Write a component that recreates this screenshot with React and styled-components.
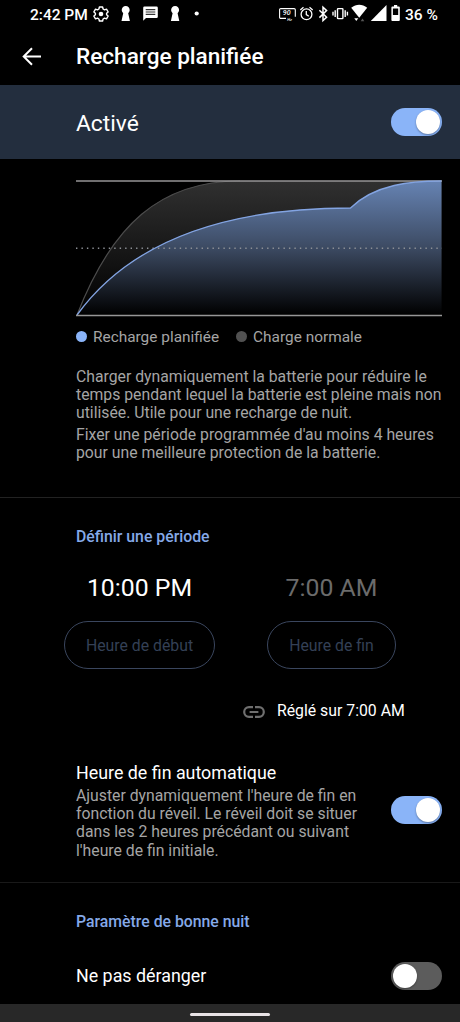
import styled, { createGlobalStyle } from 'styled-components'

export default function App() {
    return (
        <Screen>
            <GlobalStyle />
            <StatusBar />
            <Header>
                <BackIcon viewBox="0 0 20 20">
                    <path d="M10 1.2 1.7 9.5l8.3 8.3M2 9.5h17" />
                </BackIcon>
                <Title>Recharge planifiée</Title>
            </Header>
            <Banner>
                <BannerLabel>Activé</BannerLabel>
                <Switch checked />
            </Banner>
            <ChargeSection>
                <ChargeChart />
                <Legend>
                    <LegendItem><Dot color="#8ab4f8" />Recharge planifiée</LegendItem>
                    <LegendItem><Dot color="#515151" />Charge normale</LegendItem>
                </Legend>
                <Description>
                    <Paragraph>
                        Charger dynamiquement la batterie pour réduire le<br />
                        temps pendant lequel la batterie est pleine mais non<br />
                        utilisée. Utile pour une recharge de nuit.
                    </Paragraph>
                    <Paragraph>
                        Fixer une période programmée d'au moins 4 heures<br />
                        pour une meilleure protection de la batterie.
                    </Paragraph>
                </Description>
            </ChargeSection>
            <PeriodSection>
                <SectionTitle>Définir une période</SectionTitle>
                <Times>
                    <TimeColumn width="151px">
                        <Time>10:00 PM</Time>
                        <TimeButton>Heure de début</TimeButton>
                    </TimeColumn>
                    <TimeColumn width="129px">
                        <Time disabled>7:00 AM</Time>
                        <TimeButton>Heure de fin</TimeButton>
                    </TimeColumn>
                </Times>
                <LinkedAlarm>
                    <LinkIcon viewBox="0 0 22 12">
                        <path d="M10 1.2H6a4.8 4.8 0 0 0 0 9.6h4M12 1.2h4a4.8 4.8 0 0 1 0 9.6h-4M6.6 6h8.8" />
                    </LinkIcon>
                    Réglé sur 7:00 AM
                </LinkedAlarm>
                <AutoRow>
                    <div>
                        <RowTitle>Heure de fin automatique</RowTitle>
                        <Paragraph>
                            Ajuster dynamiquement l'heure de fin en<br />
                            fonction du réveil. Le réveil doit se situer<br />
                            dans les 2 heures précédant ou suivant<br />
                            l'heure de fin initiale.
                        </Paragraph>
                    </div>
                    <Switch checked />
                </AutoRow>
            </PeriodSection>
            <NightSection>
                <SectionTitle>Paramètre de bonne nuit</SectionTitle>
                <NightRow>
                    <RowTitle>Ne pas déranger</RowTitle>
                    <Switch />
                </NightRow>
            </NightSection>
            <NavBar>
                <NavHandle />
            </NavBar>
        </Screen>
    )
}

const Switch = function ({ checked }) {
    return (
        <Track $checked={checked} role="switch" aria-checked={!!checked}>
            <Thumb />
        </Track>
    )
}

const StatusBar = function () {
    return (
        <StyledStatusBar>
            <Clock>2:42 PM</Clock>
            <StatusIcons viewBox="92 4 112 20" width="112" height="20">
                {/* settings */}
                <path
                    fill="none" stroke="#fff" strokeWidth="1.4" strokeLinejoin="round"
                    d="M99.4 7h3.2l.5 2 1.4.8 2-.6 1.6 2.7-1.5 1.4v1.4l1.5 1.4-1.6 2.7-2-.6-1.4.8-.5 2h-3.2l-.5-2-1.4-.8-2 .6-1.6-2.7 1.5-1.4v-1.4l-1.5-1.4 1.6-2.7 2 .6 1.4-.8z"
                />
                <circle cx="101" cy="14" r="2.3" fill="#fff" />
                {/* keyholes */}
                <path fill="#fff" d="M123.2 13.2a4 4 0 1 1 5 0l1.7 7.8h-8.4z" />
                <path fill="#fff" d="M172.6 13.2a4 4 0 1 1 5 0l1.7 7.8h-8.4z" />
                {/* message */}
                <path fill="#fff" d="M144.5 6.5h12a1.3 1.3 0 0 1 1.3 1.3v8.9a1.3 1.3 0 0 1-1.3 1.3H146l-2.8 2.8V7.8a1.3 1.3 0 0 1 1.3-1.3z" />
                <path stroke="#333" strokeWidth="1.2" d="M145.7 9.7h9.6M145.7 12h9.6M145.7 14.3h9.6" />
                <circle cx="196.7" cy="13.5" r="2.1" fill="#fff" />
            </StatusIcons>
            <StatusIcons viewBox="278 4 124 20" width="124" height="20">
                {/* refresh rate */}
                <path fill="none" stroke="#fff" strokeWidth="1.1" d="M286 18.4h-5.2a1.2 1.2 0 0 1-1.2-1.2V9.8a1.2 1.2 0 0 1 1.2-1.2h13.3a1.2 1.2 0 0 1 1.2 1.2v7" />
                <text x="282.8" y="15.4" fontSize="7" fontStyle="italic" fill="#fff">90</text>
                <text x="287.3" y="20.7" fontSize="4" fontStyle="italic" fill="#fff">Hz</text>
                {/* alarm */}
                <g fill="none" stroke="#fff" strokeWidth="1.3">
                    <circle cx="306.5" cy="14.3" r="5.4" />
                    <path d="M306.3 10.9v3.7l2.5 1.7M300.3 10l3.2-2.7M312.7 10l-3.2-2.7" />
                </g>
                {/* bluetooth */}
                <path fill="none" stroke="#fff" strokeWidth="1.5" d="m319.4 10.2 7.2 7-3.6 3.3V7.3l3.6 3.3-7.2 7" />
                {/* vibrate */}
                <g fill="none" stroke="#fff" strokeWidth="1.4">
                    <rect x="337.5" y="8.6" width="5.4" height="10" rx=".6" />
                    <path d="M335.2 10.2v6.8M333 11.8v3.6M345.2 10.2v6.8M347.4 11.8v3.6" />
                </g>
                {/* wifi */}
                <path fill="#fff" d="M351.2 7.8c5-4 11-4 16 0l-8 10z" />
                <path fill="#fff" d="m354.3 18.3h4l-2 2.8z" />
                <path fill="#555" d="m362.5 18.4 1.8 2.8h-3.6z" />
                {/* signal */}
                <path fill="#fff" d="M386.500 5v16H370.800z" />
                {/* battery */}
                <path fill="#fff" fillRule="evenodd" d="M392.3 6.5h1.7V5h3.2v1.5h1.7q.9 0 .9.9v12.7q0 .9-.9.9h-6.6q-.9 0-.9-.9V7.4q0-.9.9-.9zM392.9 8.4v6.7h5.3V8.4z" />
            </StatusIcons>
            <Battery>36 %</Battery>
        </StyledStatusBar>
    )
}

const ChargeChart = function () {
    return (
        <Chart viewBox="76 180 366 137">
            <defs>
                <linearGradient id="normal" x1="0" y1="0" x2="0" y2="1">
                    <stop offset="0" stopColor="#303030" />
                    <stop offset="1" stopColor="#000" />
                </linearGradient>
                <linearGradient id="planned" gradientUnits="userSpaceOnUse" x1="0" y1="181" x2="0" y2="315">
                    <stop offset="0" stopColor="#6683b3" />
                    <stop offset=".5" stopColor="#3c4a62" />
                    <stop offset="1" stopColor="#000" />
                </linearGradient>
            </defs>
            <path fill="url(#normal)" d="M77 315C112 225 160 181 240 181H441.5V315z" />
            <path fill="none" stroke="#4c4c4c" strokeWidth="1.2" d="M77 315C112 225 160 181 240 181" />
            <path fill="url(#planned)" d="M77 315C135 235 235 208 350.5 208C375 184 412 181 441.5 181V315z" />
            <path stroke="#969496" strokeWidth="1.5" d="M76 181H442" />
            <path stroke="#8d9096" strokeWidth="1.4" strokeDasharray="1.4 4.06" d="M76 248.2H442" />
            <path fill="none" stroke="#83a4e2" strokeWidth="1.3" d="M77 315C135 235 235 208 350.5 208C375 184 412 181 441.5 181" />
            <path stroke="#969696" strokeWidth="1.5" d="M76 315.4H442" />
        </Chart>
    )
}

const GlobalStyle = createGlobalStyle`
    * {
        box-sizing: border-box;
    }

    body {
        margin: 0;
        background: #000;
    }
`

const Screen = styled.div`
    display: flex;
    flex-direction: column;
    width: 460px;
    height: 1022px;
    overflow: hidden;
    background: #000;
    color: #fff;
    font-family: Roboto, sans-serif;
    white-space: nowrap;
`

const StyledStatusBar = styled.div`
    display: flex;
    align-items: center;
    height: 28px;
    padding-left: 30px;
    font-size: 15.5px;
    font-weight: 500;
`

const Clock = styled.span`
    width: 62px;
    padding-top: 2px;
`

const StatusIcons = styled.svg`
    flex: none;

    & + & {
        margin-left: 74px;
    }
`

const Battery = styled.span`
    margin-left: 3px;
    padding-top: 2px;
`

const Header = styled.header`
    display: flex;
    align-items: center;
    height: 57px;
    padding-left: 22px;
`

const BackIcon = styled.svg`
    width: 20px;
    height: 20px;
    margin-right: 34px;
    fill: none;
    stroke: #fff;
    stroke-width: 2;
`

const Title = styled.h1`
    margin: 0;
    font-size: 22.6px;
    font-weight: 500;
`

const Banner = styled.div`
    display: flex;
    align-items: center;
    justify-content: space-between;
    height: 74px;
    padding: 0 18px 0 76px;
    background: #232e3e;
`

const BannerLabel = styled.span`
    padding-top: 2px;
    font-size: 22.8px;
`

const Track = styled.div`
    display: flex;
    flex: none;
    justify-content: ${props => props.$checked ? 'flex-end' : 'flex-start'};
    width: 51px;
    height: 28px;
    padding: 2px;
    border-radius: 14px;
    background: ${props => props.$checked ? '#8ab4f8' : '#5c5c5c'};
`

const Thumb = styled.div`
    width: 24px;
    height: 24px;
    border-radius: 50%;
    background: #fff;
    box-shadow: 0 1px 2px rgba(0, 0, 0, 0.35);
`

const ChargeSection = styled.section`
    height: 339px;
    padding: 21px 18px 0 76px;
    border-bottom: 1px solid #222;
`

const Chart = styled.svg`
    display: block;
    width: 366px;
    height: 137px;
`

const Legend = styled.div`
    display: flex;
    gap: 17px;
    height: 19px;
    margin-top: 10px;
    font-size: 15.4px;
    color: #a5a5a5;
`

const LegendItem = styled.span`
    display: flex;
    align-items: center;
    gap: 6px;
`

const Dot = styled.span`
    width: 11px;
    height: 11px;
    border-radius: 50%;
    background: ${props => props.color};
`

const Description = styled.div`
    display: flex;
    flex-direction: column;
    gap: 3.5px;
    margin-top: 22px;
`

const Paragraph = styled.p`
    margin: 0;
    font-size: 15.78px;
    line-height: 18.2px;
    color: #a5a5a5;
`

const PeriodSection = styled.section`
    height: 385px;
    padding-top: 29px;
    border-bottom: 1px solid #191919;
`

const SectionTitle = styled.h2`
    margin: 0 0 0 76px;
    font-size: 15.8px;
    font-weight: 500;
    line-height: 20px;
    color: #85a9e8;
`

const Times = styled.div`
    display: flex;
    gap: 52px;
    margin: 26px 0 0 64px;
`

const TimeColumn = styled.div`
    display: flex;
    flex-direction: column;
    align-items: center;
    gap: 18px;
    width: ${props => props.width};
`

const Time = styled.div`
    font-size: 24.8px;
    line-height: 30px;
    color: ${props => props.disabled ? '#6b6b6b' : '#fff'};
`

const TimeButton = styled.button`
    width: 100%;
    height: 48px;
    padding: 0;
    border: 1px solid #3a465e;
    border-radius: 24px;
    background: none;
    color: #344056;
    font: 400 15.8px Roboto, sans-serif;
`

const LinkedAlarm = styled.div`
    display: flex;
    align-items: center;
    gap: 12px;
    height: 20px;
    margin: 31px 0 0 243px;
    font-size: 15.8px;
`

const LinkIcon = styled.svg`
    width: 22px;
    height: 12px;
    margin-top: 3px;
    fill: none;
    stroke: #6f6f6f;
    stroke-width: 2.2;
`

const AutoRow = styled.div`
    display: flex;
    align-items: center;
    justify-content: space-between;
    margin-top: 40px;
    padding: 0 18px 0 76px;
`

const RowTitle = styled.div`
    padding-bottom: 2px;
    font-size: 17.85px;
    line-height: 25px;
`

const NightSection = styled.section`
    flex: 1;
    padding-top: 29px;
`

const NightRow = styled.div`
    display: flex;
    align-items: center;
    justify-content: space-between;
    margin-top: 30px;
    padding: 0 18px 0 76px;
`

const NavBar = styled.div`
    display: flex;
    align-items: center;
    justify-content: center;
    height: 18px;
    background: #282828;
`

const NavHandle = styled.div`
    width: 80px;
    height: 3px;
    margin-top: 2px;
    border-radius: 2px;
    background: #e8e3e6;
`
